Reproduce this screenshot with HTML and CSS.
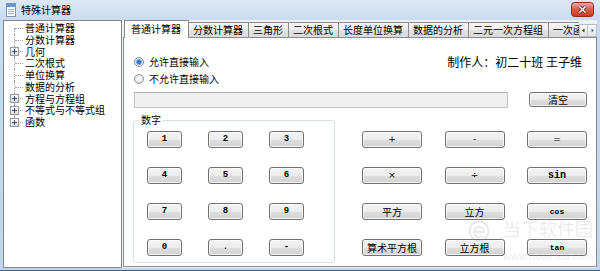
FILE: index.html
```html
<!DOCTYPE html>
<html lang="zh-CN">
<head>
<meta charset="utf-8">
<title>特殊计算器</title>
<link rel="stylesheet" href="styles.css">
</head>
<body>
<div class="window">
  <div class="titlebar">
    <svg class="app-icon" width="10" height="14" viewBox="0 0 10 14">
      <rect x="0.5" y="0.5" width="9" height="13" fill="#fdfdfd" stroke="#7f93ad"/>
      <rect x="1" y="1" width="8" height="3" fill="#5b9ad8"/>
      <path d="M2 6.5h6M2 8.5h6M2 10.5h6" stroke="#9fb0c4" stroke-width="1"/>
    </svg>
    <span class="title">特殊计算器</span>
    <span class="close">
      <svg width="23" height="15" viewBox="0 0 23 15">
        <defs>
          <linearGradient id="cg" x1="0" y1="0" x2="0" y2="1">
            <stop offset="0" stop-color="#eab0a2"/>
            <stop offset="0.45" stop-color="#d8644b"/>
            <stop offset="1" stop-color="#c53a1f"/>
          </linearGradient>
        </defs>
        <rect x="0.5" y="0.5" width="22" height="14" rx="3" fill="url(#cg)" stroke="#83301f"/>
        <path d="M8.5 4.5l6 6M14.5 4.5l-6 6" stroke="#5a1d12" stroke-width="3"/>
        <path d="M8.5 4.5l6 6M14.5 4.5l-6 6" stroke="#ffffff" stroke-width="1.6"/>
      </svg>
    </span>
  </div>
  <div class="client">
    <ul class="tree">
      <li class="node">普通计算器</li>
      <li class="node">分数计算器</li>
      <li class="node"><span class="exp"></span>几何</li>
      <li class="node">二次根式</li>
      <li class="node">单位换算</li>
      <li class="node">数据的分析</li>
      <li class="node"><span class="exp"></span>方程与方程组</li>
      <li class="node"><span class="exp"></span>不等式与不等式组</li>
      <li class="node"><span class="exp"></span>函数</li>
    </ul>
    <div class="tabctl">
      <div class="tabbar">
        <div class="tabs">
          <span class="tab active">普通计算器</span>
          <span class="tab">分数计算器</span>
          <span class="tab">三角形</span>
          <span class="tab">二次根式</span>
          <span class="tab">长度单位换算</span>
          <span class="tab">数据的分析</span>
          <span class="tab">二元一次方程组</span>
          <span class="tab">一次函数</span>
        </div>
        <div class="scroller">
          <span class="arr"><svg width="7" height="7" viewBox="0 0 7 7"><path d="M4.5 1.5v4l-2.5-2z" fill="#333"/></svg></span>
          <span class="arr"><svg width="7" height="7" viewBox="0 0 7 7"><path d="M2.5 1.5v4l2.5-2z" fill="#3a6fb0"/></svg></span>
        </div>
      </div>
      <div class="page">
        <div class="row row1">
          <label class="radio"><span class="dot on"></span>允许直接输入</label>
          <span class="author">制作人：初二十班 王子维</span>
        </div>
        <div class="row row2">
          <label class="radio"><span class="dot"></span>不允许直接输入</label>
        </div>
        <div class="inputrow">
          <div class="input"></div>
          <button class="btn clear">清空</button>
        </div>
        <div class="lower">
          <fieldset class="group">
            <legend>数字</legend>
            <div class="numgrid">
              <button class="btn num">1</button>
              <button class="btn num">2</button>
              <button class="btn num">3</button>
              <button class="btn num">4</button>
              <button class="btn num">5</button>
              <button class="btn num">6</button>
              <button class="btn num">7</button>
              <button class="btn num">8</button>
              <button class="btn num">9</button>
              <button class="btn num">0</button>
              <button class="btn num">.</button>
              <button class="btn num">-</button>
            </div>
          </fieldset>
          <div class="opgrid">
            <button class="btn op sym">+</button>
            <button class="btn op sym">-</button>
            <button class="btn op sym">=</button>
            <button class="btn op sym">×</button>
            <button class="btn op sym">÷</button>
            <button class="btn op mono sin">sin</button>
            <button class="btn op">平方</button>
            <button class="btn op">立方</button>
            <button class="btn op mono cos">cos</button>
            <button class="btn op">算术平方根</button>
            <button class="btn op">立方根</button>
            <button class="btn op mono tan">tan</button>
          </div>
        </div>
        <div class="watermark">
          <svg class="wm-logo" width="22" height="22" viewBox="0 0 22 22">
            <circle cx="11" cy="11" r="9.5" fill="none" stroke="currentColor" stroke-width="2"/>
            <path d="M6 12h10a5 5 0 1 0-1.5 3.6" fill="none" stroke="currentColor" stroke-width="2"/>
          </svg>
          <div class="wm-text">
            <span class="wm-cn">当下软件园</span>
            <span class="wm-url">www.downxia.com</span>
          </div>
        </div>
      </div>
    </div>
  </div>
</div>
</body>
</html>
```

FILE: styles.css
```css
* { box-sizing: border-box; }

html, body {
  margin: 0;
  padding: 0;
}

body {
  width: 600px;
  height: 271px;
  overflow: hidden;
  font-family: "Noto Sans CJK SC", "Noto Sans", sans-serif;
  font-size: 10px;
  color: #000;
  background: #c3d6ec;
}

.window {
  width: 600px;
  height: 271px;
  display: flex;
  flex-direction: column;
  background: linear-gradient(#dce8f6 0, #c8dbf0 20px, #c2d5ec 100%);
  border-bottom: 1px solid #3f6283;
}

/* ---------- title bar ---------- */
.titlebar {
  flex: none;
  height: 20px;
  display: flex;
  align-items: center;
  padding-left: 6px;
}

.app-icon { flex: none; display: block; }

.title {
  margin-left: 5px;
  font-size: 10px;
  line-height: 12px;
}

.close {
  margin-left: auto;
  margin-right: 6px;
  align-self: flex-start;
  margin-top: 2px;
  width: 23px;
  height: 15px;
}
.close svg { display: block; }

/* ---------- client ---------- */
.client {
  flex: 1;
  display: flex;
  gap: 1px;
  margin: 0 3px 2px 3px;
  background: #f0f0f0;
}

/* ---------- tree ---------- */
.tree {
  flex: none;
  width: 119px;
  margin: 0;
  padding: 1px 0 0 0;
  list-style: none;
  background: #fff;
  border: 1px solid #828790;
}

.node {
  position: relative;
  height: 11.75px;
  line-height: 11.75px;
  padding-left: 21px;
  white-space: nowrap;
}

.node::before {
  content: "";
  position: absolute;
  left: 10px;
  top: 0;
  bottom: 0;
  border-left: 1px dotted #a0a0a0;
}
.node:first-child::before { top: 50%; }
.node:last-child::before { bottom: 50%; }

.node::after {
  content: "";
  position: absolute;
  left: 11px;
  width: 8px;
  top: 50%;
  border-top: 1px dotted #a0a0a0;
}

.exp {
  position: absolute;
  z-index: 1;
  left: 6px;
  top: 1.5px;
  width: 9px;
  height: 9px;
  border: 1px solid #989898;
  background: linear-gradient(#ffffff, #dcdcdc);
}
.exp::before {
  content: "";
  position: absolute;
  left: 1px;
  top: 3px;
  width: 5px;
  height: 1px;
  background: #2a4a8a;
}
.exp::after {
  content: "";
  position: absolute;
  left: 3px;
  top: 1px;
  width: 1px;
  height: 5px;
  background: #2a4a8a;
}

/* ---------- tab control ---------- */
.tabctl {
  flex: 1;
  display: flex;
  flex-direction: column;
  min-width: 0;
  margin-bottom: 1px;
}

.tabbar {
  flex: none;
  position: relative;
  z-index: 2;
  height: 18px;
  display: flex;
}

.tabs {
  flex: 1;
  min-width: 0;
  display: flex;
  align-items: flex-end;
  padding-left: 3px;
  overflow: hidden;
}

.tab {
  flex: none;
  position: relative;
  height: 15px;
  margin-bottom: 1px;
  margin-right: -1px;
  padding: 0 5px 0 4px;
  line-height: 14px;
  white-space: nowrap;
  border: 1px solid #898c95;
  border-bottom: none;
  background: linear-gradient(#f4f4f4 0, #ececec 50%, #e2e2e2 51%, #dadada 100%);
}

.tab.active {
  z-index: 3;
  height: 18px;
  margin: 0 -1px 0 -2px;
  padding: 1px 7px 0 6px;
  background: #fff;
}

.scroller {
  flex: none;
  display: flex;
  align-items: flex-start;
  padding-top: 4px;
  width: 18px;
}

.arr {
  width: 9px;
  height: 13px;
  display: flex;
  align-items: center;
  justify-content: center;
  border: 1px solid #b9bec8;
  background: linear-gradient(#fafafa, #e6e6e6);
}
.arr + .arr { border-left: none; }
.arr svg { display: block; }

.page {
  flex: 1;
  position: relative;
  margin-top: -1px;
  padding: 0 9px 0 10px;
  display: flex;
  flex-direction: column;
  background: #fff;
  border: 1px solid #898c95;
}

/* ---------- radios ---------- */
.row {
  display: flex;
  align-items: center;
  justify-content: space-between;
}
.row1 { margin-top: 15px; height: 17px; }
.row2 { height: 18px; }

.radio {
  display: flex;
  align-items: center;
  line-height: 14px;
}

.dot {
  width: 10px;
  height: 10px;
  margin-right: 5px;
  border-radius: 50%;
  border: 1px solid #8e8f8f;
  background: radial-gradient(circle at 50% 40%, #ffffff 0, #e9e9e9 60%, #d6d6d6 100%);
}
.dot.on {
  background: radial-gradient(circle at 50% 50%, #1f5fae 0, #3f86d6 1.8px, #9bc5f0 3px, #eeeeee 3.6px, #f6f6f6 100%);
}

.author {
  margin-right: 5px;
  font-size: 12px;
  line-height: 17px;
  white-space: nowrap;
}

/* ---------- buttons ---------- */
.btn {
  display: block;
  flex: none;
  padding: 0;
  font-family: "Noto Sans CJK SC", "Noto Sans", sans-serif;
  font-size: 10px;
  line-height: 13px;
  color: #000;
  border: 1px solid #707070;
  border-radius: 3px;
  background: linear-gradient(#f3f3f3 0, #ececec 50%, #dedede 51%, #d2d2d2 100%);
  box-shadow: inset 0 0 0 1px rgba(255, 255, 255, 0.75);
}

.num {
  width: 35px;
  height: 17px;
  margin: 0;
  font-family: "Liberation Mono", "DejaVu Sans Mono", monospace;
  font-size: 9px;
  font-weight: bold;
}

.op {
  width: 60px;
  height: 17px;
  margin: 0;
}
.sym {
  font-family: "DejaVu Sans", sans-serif;
  font-size: 9px;
}
.mono {
  font-family: "Liberation Mono", "DejaVu Sans Mono", monospace;
  font-weight: bold;
}
.sin { font-size: 10px; }
.cos { font-size: 8px; }
.tan { font-size: 8px; }

/* ---------- input row ---------- */
.inputrow {
  margin-top: 4px;
  height: 16px;
  display: flex;
  align-items: flex-start;
}

.input {
  flex: none;
  width: 374px;
  height: 16px;
  background: #f0f0f0;
  border: 1px solid #c2c4c8;
  border-top-color: #abadb3;
}

.clear {
  width: 58px;
  height: 15px;
  margin: 0 0 0 21px;
}

/* ---------- lower area ---------- */
.lower {
  margin-top: 6px;
  display: flex;
  align-items: flex-start;
}

.group {
  flex: none;
  width: 202px;
  margin: 0 0 0 -1px;
  padding: 5px 0 6px 13px;
  border: 1px solid #d5dfe5;
  border-radius: 3px;
  min-inline-size: 0;
}

.group legend {
  margin-left: -7px;
  padding: 0 1px;
  font-size: 10px;
  line-height: 12px;
}

.numgrid {
  display: grid;
  grid-template-columns: repeat(3, 35px);
  column-gap: 26px;
  row-gap: 19px;
}

.opgrid {
  flex: none;
  margin-left: 27px;
  margin-top: 17px;
  display: grid;
  grid-template-columns: repeat(3, 60px);
  column-gap: 22.5px;
  row-gap: 19px;
}

/* ---------- watermark overlay ---------- */
.watermark {
  position: absolute;
  left: 344px;
  top: 181px;
  display: flex;
  align-items: flex-start;
  color: rgba(120, 120, 120, 0.16);
  pointer-events: none;
}

.wm-logo { display: block; margin-top: 1px; }

.wm-text {
  margin-left: 13px;
  display: flex;
  flex-direction: column;
}

.wm-cn {
  font-size: 18px;
  line-height: 18px;
  white-space: nowrap;
}

.wm-url {
  margin-top: 14px;
  font-family: "Liberation Sans", sans-serif;
  font-size: 11px;
  line-height: 11px;
  white-space: nowrap;
}
```
